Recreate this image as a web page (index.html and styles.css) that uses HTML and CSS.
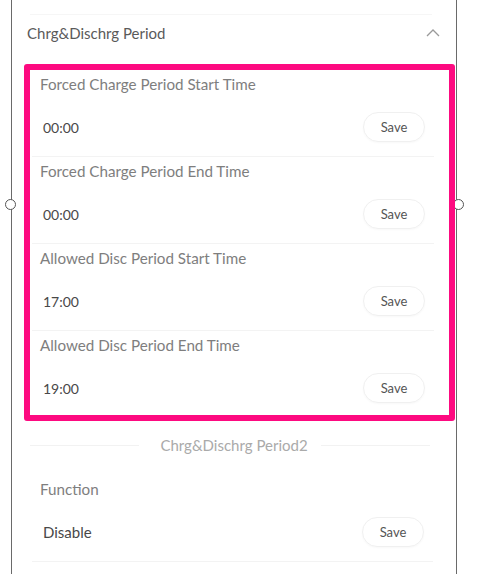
FILE: index.html
```html
<html>
    <head>
        <meta charset="UTF-8">
        <title>Chrg&amp;Dischrg Period</title>
        <meta name="viewport" content="width=device-width, initial-scale=1, maximum-scale=1">
        <link rel="stylesheet" href="styles.css">
    </head>
    <body>
        <div class="frame">
            <span class="handle handle-left"></span>
            <span class="handle handle-right"></span>

            <div class="prev"></div>

            <div class="header">
                <p>Chrg&amp;Dischrg Period</p>
                <svg class="chevron" width="14" height="8" viewBox="0 0 14 8">
                    <path d="M1 7 L7 1 L13 7" fill="none" stroke="#9a9a9a" stroke-width="1.3"/>
                </svg>
            </div>

            <div class="group highlight">
                <div class="row">
                    <p class="label">Forced Charge Period Start Time</p>
                    <div class="value">
                        <p>00:00</p>
                        <div class="button"><p>Save</p></div>
                    </div>
                </div>
                <div class="row">
                    <p class="label">Forced Charge Period End Time</p>
                    <div class="value">
                        <p>00:00</p>
                        <div class="button"><p>Save</p></div>
                    </div>
                </div>
                <div class="row">
                    <p class="label">Allowed Disc Period Start Time</p>
                    <div class="value">
                        <p>17:00</p>
                        <div class="button"><p>Save</p></div>
                    </div>
                </div>
                <div class="row last">
                    <p class="label">Allowed Disc Period End Time</p>
                    <div class="value">
                        <p>19:00</p>
                        <div class="button"><p>Save</p></div>
                    </div>
                </div>
            </div>

            <div class="subtitle">
                <span class="line"></span>
                <p>Chrg&amp;Dischrg Period2</p>
                <span class="line"></span>
            </div>

            <div class="group plain">
                <div class="row">
                    <p class="label">Function</p>
                    <div class="value">
                        <p class="word">Disable</p>
                        <div class="button"><p>Save</p></div>
                    </div>
                </div>
            </div>
        </div>
    </body>
</html>
```

FILE: styles.css
```css
html, body {
    margin: 0;
    padding: 0;
    background: #fff;
}
p {
    margin: 0;
    padding: 0;
    font-family: Lato, "Noto Sans", sans-serif;
    font-size: 14px;
    color: #555;
}
.frame {
    position: relative;
    margin-left: 11px;
    width: 444px;
    height: 574px;
    border-left: 1px solid #6a6a6a;
    border-right: 1px solid #6a6a6a;
    overflow: visible;
}
.handle {
    position: absolute;
    top: 199px;
    width: 9px;
    height: 9px;
    border: 1.5px solid #555;
    border-radius: 50%;
    background: #fff;
    z-index: 0;
}
.handle-left {
    left: -7px;
}
.handle-right {
    right: -8px;
}
.prev {
    height: 14px;
    margin: 0 24px 0 18px;
    border-bottom: 1px solid #f6f6f6;
}
.header {
    height: 49px;
    display: flex;
    justify-content: space-between;
    align-items: flex-start;
    padding: 8px 16px 0 15px;
    box-sizing: border-box;
}
.header p {
    line-height: 20px;
    font-size: 15px;
    color: #5a5a5a;
}
.chevron {
    margin-top: 6px;
}
.group {
    position: relative;
    z-index: 1;
}
.highlight {
    margin: 0 1px 0 12px;
    border: 6px solid #fd0a80;
    border-radius: 3px;
    padding: 0 15px 0 2px;
}
.plain {
    padding: 6px 23px 0 20px;
}
.row {
    padding: 0 9px 14px 8px;
    border-bottom: 1px solid #f3f3f3;
}
.row.last {
    padding-bottom: 12px;
    border-bottom: none;
}
.row .label {
    line-height: 28px;
    font-size: 15.2px;
    color: #7e7e7e;
}
.value {
    display: flex;
    justify-content: space-between;
    align-items: center;
    margin-top: 14px;
    height: 30px;
    padding-left: 3px;
}
.value p {
    color: #484848;
    font-size: 14px;
}
.value .word {
    font-size: 15px;
}
.button {
    width: 62px;
    height: 30px;
    border: 1px solid #f0f0f0;
    border-radius: 16px;
    box-sizing: border-box;
    box-shadow: 0 1px 2px rgba(0, 0, 0, 0.03);
    text-align: center;
}
.button p {
    line-height: 28px;
    font-size: 13px;
    color: #555;
}
.subtitle {
    height: 48px;
    display: flex;
    align-items: center;
    gap: 17px;
    padding: 0 26px 0 18px;
}
.subtitle .line {
    flex: 1;
    height: 1px;
    background: #f2f2f2;
}
.subtitle p {
    margin-left: 4px;
    margin-right: -4px;
    color: #aaa;
    font-size: 15px;
}
```
